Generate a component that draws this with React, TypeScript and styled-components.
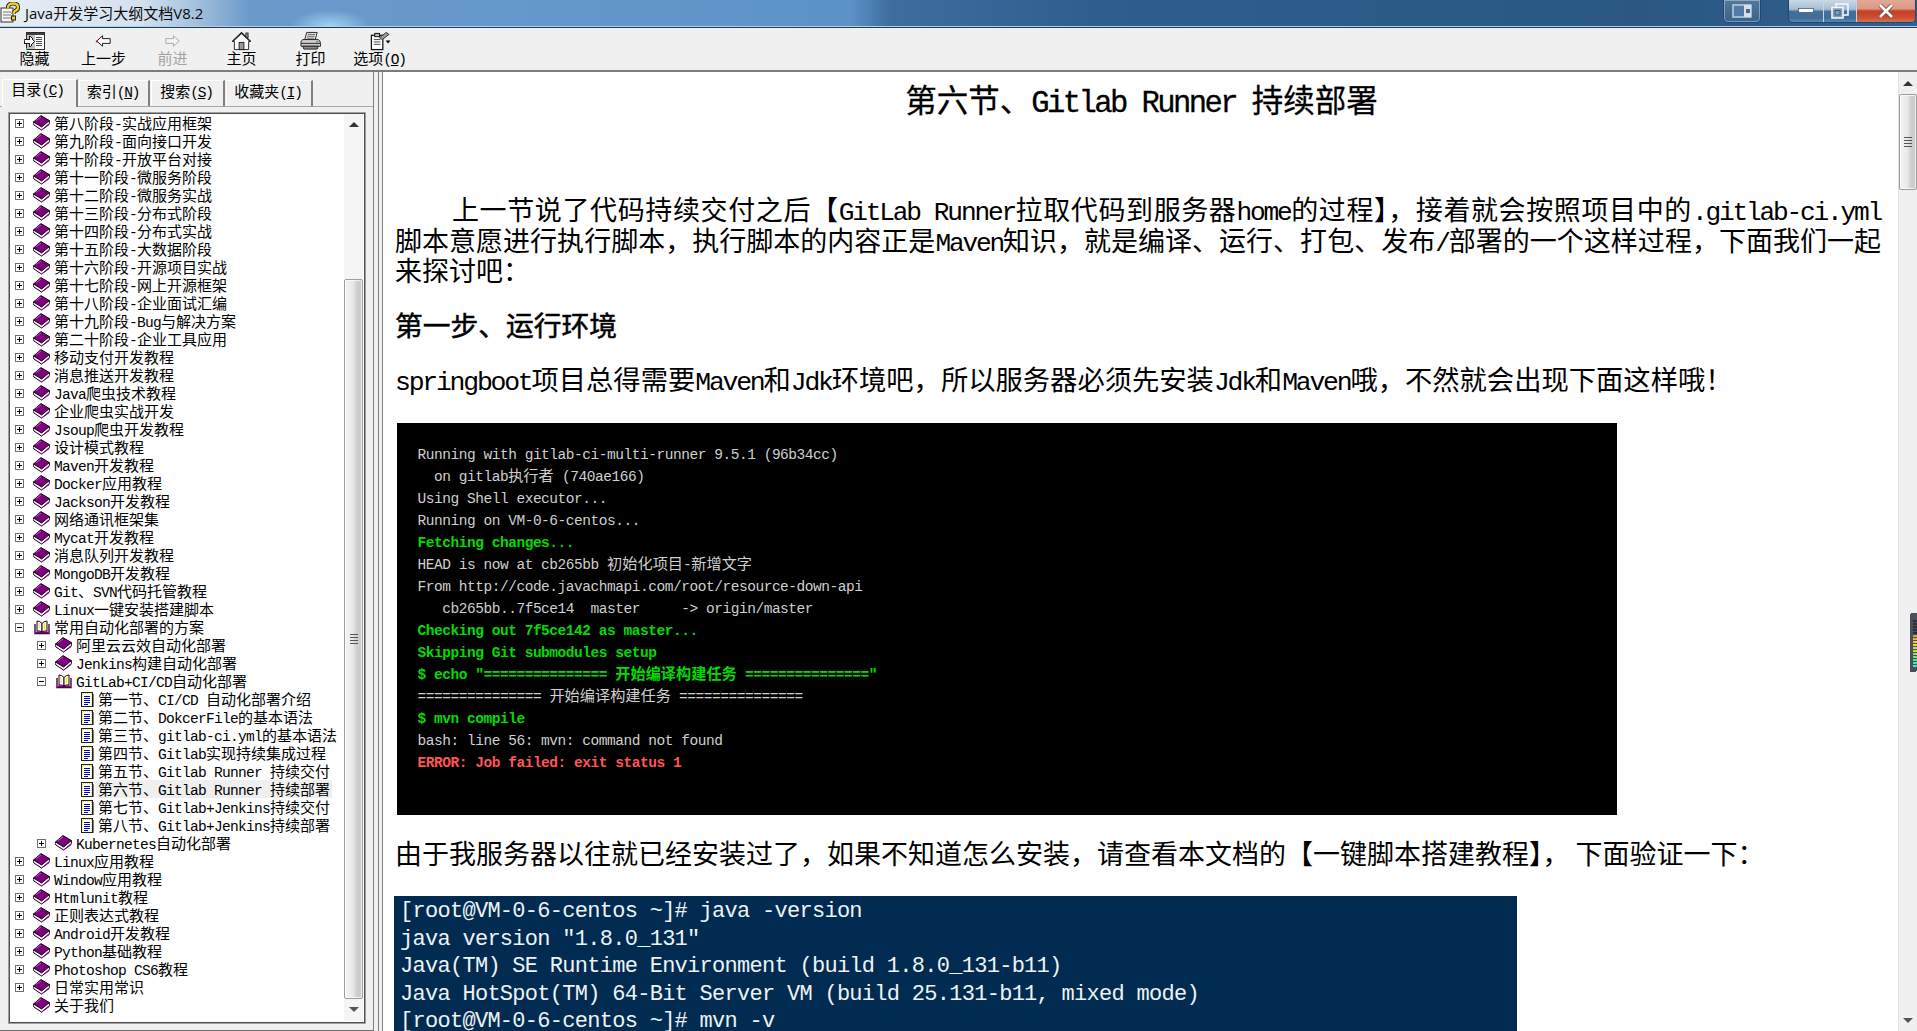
import React from "react";
import styled, { createGlobalStyle } from "styled-components";

const CJK = '"Noto Sans CJK SC", sans-serif';
const MONO = '"Liberation Mono", "Noto Sans CJK SC", monospace';

const Global = createGlobalStyle`
  html, body { margin: 0; padding: 0; height: 100%; overflow: hidden; background: #f0f0f0; }
  #root { height: 100%; }
  * { box-sizing: border-box; }
`;

const Latin = styled.span`
  font-family: ${MONO};
  font-size: 0.97em;
  letter-spacing: -0.0845em;
  line-height: 0;
`;

const Windowed = styled.div`
  position: relative;
  width: 100%;
  height: 100%;
  display: flex;
  flex-direction: column;
  overflow: hidden;
  font-family: ${CJK};
  color: #000;
`;

const TitleBar = styled.header`
  flex: 0 0 27px;
  display: flex;
  align-items: flex-start;
  border-bottom: 1px solid #1d3c5c;
  box-shadow: inset 0 -1px 0 #b9cfe4;
  background:
    radial-gradient(ellipse 40px 16px at 330px 26px, rgba(170, 220, 250, 0.85), rgba(170, 220, 250, 0) 100%),
    linear-gradient(to right, #e6edf4 0, #d5e1ee 140px, #a5c1dd 195px, #6a9aca 250px, #6397cc 600px, #5d92c8 850px, #3d6e9f 890px, #2e5e8e 1100px, #2a5883 1640px, #2f5f8e 1917px);
`;

const TitleIcon = styled.svg`
  flex: none;
  width: 20px;
  height: 21px;
  margin: 2px 5px 0 0;
`;

const TitleText = styled.span`
  font-family: "Open Sans", ${CJK};
  font-size: 15px;
  line-height: 27px;
  white-space: nowrap;
  color: #0c0c0c;
`;

const CaptionGroup = styled.div`
  margin-left: auto;
  display: flex;
  align-items: flex-start;
  gap: 27px;
  padding-right: 1px;
`;

const CaptionSolo = styled.div`
  width: 38px;
  height: 23px;
  display: flex;
  align-items: center;
  justify-content: center;
  border: 1px solid #234669;
  border-top: 0;
  border-radius: 0 0 5px 5px;
  box-shadow: inset 0 0 0 1px rgba(255, 255, 255, 0.35);
  background: linear-gradient(to bottom, rgba(255, 255, 255, 0.18), rgba(255, 255, 255, 0.05));
`;

const CaptionCluster = styled.div`
  display: flex;
  height: 23px;
  border: 1px solid #234669;
  border-top: 0;
  border-radius: 0 0 5px 5px;
  overflow: hidden;
`;

const CaptionButton = styled.div<{ $w: number; $close?: boolean }>`
  width: ${(p) => p.$w}px;
  display: flex;
  align-items: center;
  justify-content: center;
  border-right: ${(p) => (p.$close ? "0" : "1px solid #c4d5e6")};
  background: ${(p) =>
    p.$close
      ? "linear-gradient(to bottom, #e4a796 0, #d99a88 40%, #c53f25 50%, #d04e2c 80%, #c8745e 100%)"
      : "linear-gradient(to bottom, #c9d9e7 0, #a6bdd3 42%, #42719e 52%, #3e6d9a 80%, #5a86ae 100%)"};
`;

const Toolbar = styled.nav`
  flex: 0 0 44px;
  min-height: 0;
  display: flex;
  background: #f0f0f0;
  border-bottom: 2px solid #7c7c7c;
`;

const ToolButton = styled.div<{ $disabled?: boolean }>`
  width: 69px;
  display: flex;
  flex-direction: column;
  align-items: center;
  padding-top: 3px;
  font-size: 15px;
  line-height: 18px;
  color: ${(p) => (p.$disabled ? "#a3a3a3" : "#000")};
`;

const ToolLabel = styled.span`
  margin-top: -2px;
`;

const ToolIcon = styled.svg`
  display: block;
  width: 23px;
  height: 20px;
  flex: none;
`;

const Main = styled.main`
  flex: 1;
  min-height: 0;
  display: flex;
`;

const SidePanel = styled.aside`
  flex: 0 0 374px;
  display: flex;
  flex-direction: column;
  padding-top: 7px;
  background: #f0f0f0;
  border-right: 1px solid #808080;
  border-bottom: 1px solid #6e6e6e;
`;

const TabStrip = styled.div`
  flex: 0 0 28px;
  min-height: 0;
  display: flex;
  align-items: flex-end;
  gap: 1px;
  padding-left: 2px;
  border-bottom: 1px solid #a8a8a8;
`;

const Tab = styled.div<{ $w: number; $active?: boolean }>`
  width: ${(p) => p.$w}px;
  height: ${(p) => (p.$active ? 28 : 26)}px;
  margin-bottom: ${(p) => (p.$active ? -1 : 0)}px;
  display: flex;
  align-items: center;
  justify-content: center;
  padding-bottom: ${(p) => (p.$active ? 9 : 6)}px;
  padding-right: ${(p) => (p.$active ? 4 : 2)}px;
  font-size: 15px;
  line-height: 18px;
  white-space: pre;
  background: #f0f0f0;
  border-top: 1px solid #fff;
  border-left: 1px solid #fff;
  border-right: 2px solid #808080;
`;

const TreeFrame = styled.div`
  flex: 1;
  min-height: 0;
  display: flex;
  margin: 5px 7px 6px 8px;
  background: #fff;
  border: 1px solid #a0a0a0;
  outline: 1px solid #505050;
  outline-offset: -2px;
  padding: 1px 2px 2px 2px;
`;

const TreeList = styled.ul`
  flex: 1;
  min-width: 0;
  margin: 0;
  padding: 0;
  list-style: none;
  overflow: hidden;
`;

const TreeRow = styled.li<{ $level: number }>`
  height: 18px;
  display: flex;
  align-items: center;
  padding-left: ${(p) => 4 + p.$level * 22}px;
  font-size: 15px;
  line-height: 18px;
  white-space: pre;

  ${Latin} {
    letter-spacing: -0.73px;
  }
`;

const ExpanderSlot = styled.span`
  flex: 0 0 18px;
  display: flex;
  align-items: center;
`;

const IconSlot = styled.span`
  flex: 0 0 17px;
  margin-right: 4px;
  display: flex;
  justify-content: flex-end;
  align-items: center;
`;

const RowLabel = styled.span<{ $selected?: boolean }>`
  margin-left: -2px;
  padding: 0 2px;
  background: ${(p) => (p.$selected ? "#efefef" : "transparent")};
`;

const Glyph = styled.svg`
  display: block;
  flex: none;
`;

const TreeScroll = styled.div`
  flex: 0 0 19px;
  display: flex;
  flex-direction: column;
  background: #f5f5f5;
`;

const ArrowBox = styled.div<{ $h: number }>`
  flex: 0 0 ${(p) => p.$h}px;
  display: flex;
  align-items: center;
  justify-content: center;
`;

const Arrow = styled.span<{ $down?: boolean }>`
  width: 0;
  height: 0;
  border-left: 5px solid transparent;
  border-right: 5px solid transparent;
  ${(p) => (p.$down ? "border-top: 5px solid #555;" : "border-bottom: 5px solid #333;")}
`;

const ScrollGap = styled.div<{ $h: number }>`
  flex: 0 0 ${(p) => p.$h}px;
`;

const Thumb = styled.div<{ $h: number }>`
  flex: 0 0 ${(p) => p.$h}px;
  display: flex;
  flex-direction: column;
  align-items: center;
  justify-content: center;
  gap: 2px;
  border: 1px solid #9c9c9c;
  border-radius: 2px;
  background: linear-gradient(to right, #f4f4f4 0, #e9e9e9 45%, #cfcfcf 70%, #c8c8c8 100%);
  box-shadow: inset 0 0 0 1px rgba(255, 255, 255, 0.7);
`;

const Grip = styled.span`
  width: 8px;
  height: 1px;
  background: #555;
`;

const Splitter = styled.div`
  flex: 0 0 9px;
  display: flex;
  padding-left: 4px;
  background: #f0f0f0;
`;

const SplitterBar = styled.div`
  width: 5px;
  border-left: 1px solid #808080;
  border-right: 1px solid #808080;
`;

const Article = styled.article`
  flex: 1;
  min-width: 0;
  padding: 6px 17px 0 12px;
  overflow: hidden;
  background: #fff;
  font-size: 27px;
  line-height: 30.6px;
`;

const DocTitle = styled.h1`
  margin: 0 0 76px 7px;
  font-size: 31.5px;
  font-weight: 400;
  -webkit-text-stroke: 0.3px #000;
  line-height: 40px;
  text-align: center;
  white-space: pre;
`;

const JustifiedLine = styled.div<{ $indent?: boolean }>`
  text-align: justify;
  text-align-last: justify;
  white-space: pre-wrap;
  ${(p) => (p.$indent ? "padding-left: 57px;" : "")}
`;

const Paragraph = styled.p<{ $top: number; $size?: number }>`
  margin: ${(p) => p.$top}px 0 0;
  font-size: ${(p) => p.$size ?? 27}px;
  white-space: pre;
`;

const SectionHead = styled.h2`
  margin: 20.5px 0 0;
  font-size: 27.75px;
  font-weight: 400;
  -webkit-text-stroke: 0.5px #000;
  line-height: 36px;
  white-space: pre;
`;

const Terminal = styled.div`
  width: 1220px;
  height: 392px;
  margin: 29px 0 0 2px;
  padding: 20.5px 0 0 20.5px;
  background: #000;
  font-family: ${MONO};
  font-size: 14.5px;
  letter-spacing: -0.46px;
  line-height: 22px;
  white-space: pre;
`;

const TermLine = styled.div<{ $tone?: "green" | "red" }>`
  height: 22px;
  color: ${(p) => (p.$tone === "green" ? "#00dc00" : p.$tone === "red" ? "#ff5555" : "#cfcfcf")};
  font-weight: ${(p) => (p.$tone ? 700 : 400)};
`;

const TermCjk = styled.span`
  font-family: ${CJK};
  font-size: 15.2px;
  letter-spacing: 0;
  line-height: 0;
`;

const Shell = styled.div`
  width: 1123px;
  margin: 27.2px 0 0 -1px;
  padding: 2px 0 0 6px;
  background: #012b50;
  color: #edf3f5;
  font-family: ${MONO};
  font-size: 22px;
  letter-spacing: -0.72px;
  line-height: 27.5px;
  white-space: pre;
`;

const MainScroll = styled.div`
  flex: 0 0 19px;
  display: flex;
  flex-direction: column;
  background: #f0f0f0;
  border-left: 1px solid #e2e2e2;
`;

const ScrollFill = styled.div`
  flex: 1;
`;

const MeterOverlay = styled.svg`
  position: absolute;
  right: 0;
  top: 613px;
  width: 7px;
  height: 59px;
`;

const Mixed = ({ text }: { text: string }) => (
  <>
    {text.split(/([\x00-\x7f]+)/).map((part, i) =>
      part === "" ? null : /^[\x00-\x7f]/.test(part) ? <Latin key={i}>{part}</Latin> : <React.Fragment key={i}>{part}</React.Fragment>
    )}
  </>
);

const TermMixed = ({ text }: { text: string }) => (
  <>
    {text.split(/([^\x00-\x7f]+)/).map((part, i) =>
      part === "" ? null : /^[^\x00-\x7f]/.test(part) ? <TermCjk key={i}>{part}</TermCjk> : <React.Fragment key={i}>{part}</React.Fragment>
    )}
  </>
);

const Expander = ({ open }: { open?: boolean }) => (
  <Glyph width="9" height="9" viewBox="0 0 9 9" shapeRendering="crispEdges">
    <rect x="0.5" y="0.5" width="8" height="8" fill="#fff" stroke="#6f6f6f" />
    <path d={open ? "M2 4.5h5" : "M2 4.5h5M4.5 2v5"} stroke="#000" fill="none" />
  </Glyph>
);

const Book = () => (
  <Glyph width="17" height="16" viewBox="0 0 17 16">
    <path d="M0.5 7 L8 0.6 L16.4 5.6 L8.6 12 Z" fill="#800080" stroke="#1a001a" strokeWidth="1" strokeLinejoin="round" />
    <path d="M0.5 7 L8.6 12 L16.4 5.6 L16.4 8.6 L8.6 15 L0.9 10 Q-0.2 8.4 0.5 7 Z" fill="#fff" stroke="#1a001a" strokeWidth="1" strokeLinejoin="round" />
    <path d="M1 10 L8.6 15 L16.4 8.6 L16.4 10 L8.6 15.6 Z" fill="#800080" />
    <path d="M3 5.5 L8 2" stroke="#c060c0" strokeWidth="1" />
  </Glyph>
);

const OpenBook = () => (
  <Glyph width="16" height="15" viewBox="0 0 16 15">
    <path d="M1 4 L1 13.5 L15 13.5 L15 4" fill="none" stroke="#4a004a" strokeWidth="1.4" />
    <path d="M1.6 11.5 H14.4 V13 H1.6 Z" fill="#800080" />
    <path d="M3 1 Q6 1 8 3.5 L8 12 Q6 10.5 3 11 Z" fill="#fff" stroke="#1a001a" />
    <path d="M13 1 Q10 1 8 3.5 L8 12 Q10 10.5 13 11 Z" fill="#ffffc0" stroke="#1a001a" />
    <path d="M5 3.5 V8.5 M10.5 3.5 V8.5" stroke="#e0c000" strokeDasharray="1 1" strokeWidth="1.4" />
  </Glyph>
);

const DocIcon = () => (
  <Glyph width="13" height="15" viewBox="0 0 13 15" shapeRendering="crispEdges">
    <rect x="0.5" y="0.5" width="11" height="13.5" fill="#fff" stroke="#202020" />
    <rect x="12" y="2" width="1" height="13" fill="#808080" />
    <path d="M1.5 1.5h9" stroke="#ffe000" strokeDasharray="1 1" />
    <path d="M1.5 1.5v12" stroke="#ffe000" strokeDasharray="1 1" />
    <path d="M10.5 2v12" stroke="#ffe000" strokeDasharray="1 1" />
    <path d="M3 4.5h6M3 6.5h6M3 8.5h6M3 10.5h6M3 12.5h4" stroke="#0000c8" />
  </Glyph>
);

type Node = { t: string; l?: number; k?: "closed" | "open" | "leaf" | "bare"; sel?: boolean };

const rows: Node[] = [
  ...[
    "第八阶段-实战应用框架", "第九阶段-面向接口开发", "第十阶段-开放平台对接", "第十一阶段-微服务阶段",
    "第十二阶段-微服务实战", "第十三阶段-分布式阶段", "第十四阶段-分布式实战", "第十五阶段-大数据阶段",
    "第十六阶段-开源项目实战", "第十七阶段-网上开源框架", "第十八阶段-企业面试汇编", "第十九阶段-Bug与解决方案",
    "第二十阶段-企业工具应用", "移动支付开发教程", "消息推送开发教程", "Java爬虫技术教程", "企业爬虫实战开发",
    "Jsoup爬虫开发教程", "设计模式教程", "Maven开发教程", "Docker应用教程", "Jackson开发教程", "网络通讯框架集",
    "Mycat开发教程", "消息队列开发教程", "MongoDB开发教程", "Git、SVN代码托管教程", "Linux一键安装搭建脚本",
  ].map((t) => ({ t })),
  { t: "常用自动化部署的方案", k: "open" },
  { t: "阿里云云效自动化部署", l: 1 },
  { t: "Jenkins构建自动化部署", l: 1 },
  { t: "GitLab+CI/CD自动化部署", l: 1, k: "open" },
  { t: "第一节、CI/CD 自动化部署介绍", l: 2, k: "leaf" },
  { t: "第二节、DokcerFile的基本语法", l: 2, k: "leaf" },
  { t: "第三节、gitlab-ci.yml的基本语法", l: 2, k: "leaf" },
  { t: "第四节、Gitlab实现持续集成过程", l: 2, k: "leaf" },
  { t: "第五节、Gitlab Runner 持续交付", l: 2, k: "leaf" },
  { t: "第六节、Gitlab Runner 持续部署", l: 2, k: "leaf", sel: true },
  { t: "第七节、Gitlab+Jenkins持续交付", l: 2, k: "leaf" },
  { t: "第八节、Gitlab+Jenkins持续部署", l: 2, k: "leaf" },
  { t: "Kubernetes自动化部署", l: 1 },
  ...["Linux应用教程", "Window应用教程", "Htmlunit教程", "正则表达式教程", "Android开发教程", "Python基础教程", "Photoshop CS6教程", "日常实用常识"].map((t) => ({ t })),
  { t: "关于我们", k: "bare" },
];

const termLines: { t: string; tone?: "green" | "red" }[] = [
  { t: "Running with gitlab-ci-multi-runner 9.5.1 (96b34cc)" },
  { t: "  on gitlab执行者 (740ae166)" },
  { t: "Using Shell executor..." },
  { t: "Running on VM-0-6-centos..." },
  { t: "Fetching changes...", tone: "green" },
  { t: "HEAD is now at cb265bb 初始化项目-新增文字" },
  { t: "From http://code.javachmapi.com/root/resource-down-api" },
  { t: "   cb265bb..7f5ce14  master     -> origin/master" },
  { t: "Checking out 7f5ce142 as master...", tone: "green" },
  { t: "Skipping Git submodules setup", tone: "green" },
  { t: '$ echo "=============== 开始编译构建任务 ==============="', tone: "green" },
  { t: "=============== 开始编译构建任务 ===============" },
  { t: "$ mvn compile", tone: "green" },
  { t: "bash: line 56: mvn: command not found" },
  { t: "ERROR: Job failed: exit status 1", tone: "red" },
];

const shellLines = [
  "[root@VM-0-6-centos ~]# java -version",
  'java version "1.8.0_131"',
  "Java(TM) SE Runtime Environment (build 1.8.0_131-b11)",
  "Java HotSpot(TM) 64-Bit Server VM (build 25.131-b11, mixed mode)",
  "[root@VM-0-6-centos ~]# mvn -v",
];

const Row = ({ n }: { n: Node }) => {
  const kind = n.k ?? "closed";
  return (
    <TreeRow $level={n.l ?? 0}>
      <ExpanderSlot>
        {kind === "closed" && <Expander />}
        {kind === "open" && <Expander open />}
      </ExpanderSlot>
      <IconSlot>
        {kind === "open" ? <OpenBook /> : kind === "leaf" ? <DocIcon /> : <Book />}
      </IconSlot>
      <RowLabel $selected={n.sel}>
        <Mixed text={n.t} />
      </RowLabel>
    </TreeRow>
  );
};

const meterColors = ["#2c2f38", "#2c2f38", "#2c2f38", "#2c2f38", "#2c2f38", "#e8a030", "#f0b030", "#f0c830", "#e8dc30", "#d0e430", "#b0e840", "#90e850", "#70e870", "#50e890", "#40e8a8", "#40e8b8"];

export default function App() {
  return (
    <Windowed>
      <Global />
      <TitleBar>
        <TitleIcon viewBox="0 0 20 21">
          <rect x="1" y="6" width="12" height="14" fill="#f4f4f4" stroke="#333" />
          <path d="M3 10h8M3 13h8M3 16h8" stroke="#777" />
          <path d="M8 6 Q8 1.5 13 1.5 Q18 1.5 18 5.5 Q18 8 15 9 Q13.5 9.8 13.5 12" fill="none" stroke="#222" strokeWidth="4.2" />
          <path d="M8 6 Q8 1.5 13 1.5 Q18 1.5 18 5.5 Q18 8 15 9 Q13.5 9.8 13.5 12" fill="none" stroke="#f0d020" strokeWidth="2.4" />
          <rect x="11.5" y="14" width="4" height="4" fill="#f0d020" stroke="#222" />
        </TitleIcon>
        <TitleText>Java开发学习大纲文档V8.2</TitleText>
        <CaptionGroup>
          <CaptionSolo>
            <svg width="20" height="14" viewBox="0 0 20 14">
              <rect x="1" y="1" width="18" height="12" fill="#4f7ba6" stroke="#c9d6e2" strokeWidth="1.4" />
              <rect x="12" y="1" width="7" height="12" fill="#d7e0e8" />
              <rect x="14" y="5" width="4" height="4" fill="#45698c" />
            </svg>
          </CaptionSolo>
          <CaptionCluster>
            <CaptionButton $w={35}>
              <svg width="16" height="6" viewBox="0 0 16 6">
                <rect x="0.5" y="0.5" width="15" height="4" fill="#fff" stroke="#2e4f70" strokeWidth="0.7" />
              </svg>
            </CaptionButton>
            <CaptionButton $w={33}>
              <svg width="18" height="16" viewBox="0 0 18 16">
                <rect x="5" y="1" width="12" height="11" fill="none" stroke="#f2f6f9" strokeWidth="1.6" />
                <rect x="1" y="4.5" width="11" height="10.5" fill="#7d9dbb" stroke="#f2f6f9" strokeWidth="1.6" />
                <rect x="4" y="7.5" width="5" height="4.5" fill="#7d9dbb" stroke="#3b5c7c" />
              </svg>
            </CaptionButton>
            <CaptionButton $w={58} $close>
              <svg width="16" height="14" viewBox="0 0 16 14">
                <path d="M2 1 L14 13 M14 1 L2 13" stroke="#5c3a34" strokeWidth="4.2" />
                <path d="M2 1 L14 13 M14 1 L2 13" stroke="#fff" strokeWidth="2.8" />
              </svg>
            </CaptionButton>
          </CaptionCluster>
        </CaptionGroup>
      </TitleBar>

      <Toolbar>
        <ToolButton>
          <ToolIcon viewBox="0 0 24 21" shapeRendering="crispEdges">
            <rect x="3.5" y="1.5" width="19" height="18" fill="#fff" stroke="#222" />
            <rect x="4" y="2" width="18" height="2" fill="#404040" />
            <rect x="4" y="4" width="8" height="15" fill="#c0c0c0" />
            <path d="M1 8.5h6V5l5 6-5 6v-3.5H1z" fill="#fff" stroke="#111" />
            <path d="M14 7h6M14 9h6M14 11h6M14 13h6M14 15h6" stroke="#444" />
            <rect x="1" y="8" width="1" height="2" fill="#e02020" />
            <rect x="3" y="18" width="1" height="2" fill="#20c020" />
          </ToolIcon>
          <ToolLabel>隐藏</ToolLabel>
        </ToolButton>
        <ToolButton>
          <ToolIcon viewBox="0 0 24 21">
            <path d="M5 10.5 L11 5 V8 H19 V13 H11 V16 Z" fill="#fff" stroke="#111" />
            <rect x="4" y="10" width="2" height="2" fill="#d02020" />
          </ToolIcon>
          <ToolLabel>上一步</ToolLabel>
        </ToolButton>
        <ToolButton $disabled>
          <ToolIcon viewBox="0 0 24 21">
            <path d="M19 10.5 L13 5 V8 H5 V13 H13 V16 Z" fill="#f4f4f4" stroke="#a8a8a8" />
          </ToolIcon>
          <ToolLabel>前进</ToolLabel>
        </ToolButton>
        <ToolButton>
          <ToolIcon viewBox="0 0 24 21">
            <path d="M2.5 11 L12 2 L21.5 11 L19.5 11 L19.5 19.5 L4.5 19.5 L4.5 11 Z" fill="#f8f8f8" stroke="#222" />
            <path d="M2.5 11 L12 2 L21.5 11" fill="none" stroke="#222" strokeWidth="1.6" />
            <rect x="16.5" y="2" width="2.5" height="5" fill="#777" stroke="#222" strokeWidth="0.7" />
            <rect x="9.5" y="12" width="5" height="7.5" fill="#9a9a9a" stroke="#222" />
          </ToolIcon>
          <ToolLabel>主页</ToolLabel>
        </ToolButton>
        <ToolButton>
          <ToolIcon viewBox="0 0 24 21">
            <path d="M8 1.5 H19 L17 9 H6 Z" fill="#f4f4f4" stroke="#222" />
            <path d="M9 3.5h8M8.5 5.5h8M8 7.5h8" stroke="#555" />
            <path d="M4 9 H20 Q22.5 10 22.5 13 V16 H2 V12 Q2 10 4 9 Z" fill="#cfcfcf" stroke="#222" />
            <path d="M2 13 H22" stroke="#222" />
            <path d="M4 16 H20 L19 19 H5 Z" fill="#8a8a8a" stroke="#222" />
            <rect x="18" y="10.5" width="2" height="1.5" fill="#20a0b0" />
          </ToolIcon>
          <ToolLabel>打印</ToolLabel>
        </ToolButton>
        <ToolButton>
          <ToolIcon viewBox="0 0 24 21">
            <rect x="3.5" y="4.5" width="12" height="15" fill="#fff" stroke="#111" strokeWidth="1.3" />
            <path d="M6 9h7M6 11.5h7M6 14h7" stroke="#444" />
            <rect x="7" y="2.5" width="5" height="3.5" fill="#bbb" stroke="#111" />
            <path d="M12 7 L19 1.5 L22 3.5 L15 9 Z" fill="#9a9a9a" stroke="#333" />
            <path d="M18.5 10 h5 l-2.5 3 z" fill="#000" />
          </ToolIcon>
          <ToolLabel>
            选项<Latin>(<u>O</u>)</Latin>
          </ToolLabel>
        </ToolButton>
      </Toolbar>

      <Main>
        <SidePanel>
          <TabStrip>
            <Tab $w={76} $active>
              <span>目录<Latin>(<u>C</u>)</Latin></span>
            </Tab>
            <Tab $w={71}>
              <span>索引<Latin>(<u>N</u>)</Latin></span>
            </Tab>
            <Tab $w={74}>
              <span>搜索<Latin>(<u>S</u>)</Latin></span>
            </Tab>
            <Tab $w={87}>
              <span>收藏夹<Latin>(<u>I</u>)</Latin></span>
            </Tab>
          </TabStrip>
          <TreeFrame>
            <TreeList>
              {rows.map((n, i) => (
                <Row key={i} n={n} />
              ))}
            </TreeList>
            <TreeScroll>
              <ArrowBox $h={20}>
                <Arrow />
              </ArrowBox>
              <ScrollGap $h={145} />
              <Thumb $h={720}>
                <Grip />
                <Grip />
                <Grip />
                <Grip />
              </Thumb>
              <ArrowBox $h={21}>
                <Arrow $down />
              </ArrowBox>
            </TreeScroll>
          </TreeFrame>
        </SidePanel>

        <Splitter>
          <SplitterBar />
        </Splitter>

        <Article>
          <DocTitle>
            <Mixed text="第六节、Gitlab Runner 持续部署" />
          </DocTitle>
          <JustifiedLine $indent>
            <Mixed text="上一节说了代码持续交付之后【GitLab Runner拉取代码到服务器home的过程】，接着就会按照项目中的.gitlab-ci.yml" />
          </JustifiedLine>
          <JustifiedLine>
            <Mixed text="脚本意愿进行执行脚本，执行脚本的内容正是Maven知识，就是编译、运行、打包、发布/部署的一个这样过程，下面我们一起" />
          </JustifiedLine>
          <Paragraph $top={0}>来探讨吧：</Paragraph>
          <SectionHead>第一步、运行环境</SectionHead>
          <Paragraph $top={21.2} $size={27.3}>
            <Mixed text="springboot项目总得需要Maven和Jdk环境吧，所以服务器必须先安装Jdk和Maven哦，不然就会出现下面这样哦！" />
          </Paragraph>
          <Terminal>
            {termLines.map((l, i) => (
              <TermLine key={i} $tone={l.tone}>
                <TermMixed text={l.t} />
              </TermLine>
            ))}
          </Terminal>
          <Paragraph $top={23.2}>由于我服务器以往就已经安装过了，如果不知道怎么安装，请查看本文档的【一键脚本搭建教程】， 下面验证一下：</Paragraph>
          <Shell>
            {shellLines.map((l, i) => (
              <div key={i}>{l}</div>
            ))}
          </Shell>
        </Article>

        <MainScroll>
          <ArrowBox $h={22}>
            <Arrow />
          </ArrowBox>
          <Thumb $h={96}>
            <Grip />
            <Grip />
            <Grip />
            <Grip />
          </Thumb>
          <ScrollFill />
          <ArrowBox $h={22}>
            <Arrow $down />
          </ArrowBox>
        </MainScroll>
      </Main>

      <MeterOverlay viewBox="0 0 7 59" shapeRendering="crispEdges">
        <rect x="0" y="0" width="7" height="59" rx="2" fill="#4b4f5c" />
        {meterColors.map((c, i) => (
          <rect key={i} x="3" y={7 + i * 3} width="4" height="2" fill={c} />
        ))}
      </MeterOverlay>
    </Windowed>
  );
}
